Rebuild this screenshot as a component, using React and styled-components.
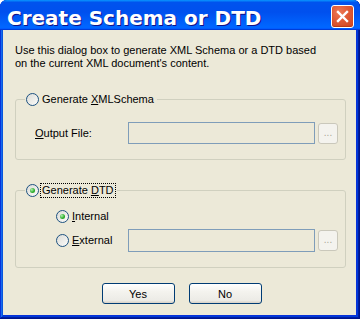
import React from "react";
import styled, { createGlobalStyle } from "styled-components";

const Global = createGlobalStyle`
  html, body { margin: 0; padding: 0; background: #ffffff; }
  * { box-sizing: border-box; }
`;

const Window = styled.div`
  width: 360px;
  height: 319px;
  display: flex;
  flex-direction: column;
  border-radius: 7px 7px 0 0;
  overflow: hidden;
  background: #0831d9;
  box-shadow: inset -1px -1px #00138c, inset 1px 1px #0831d9,
    inset -2px -2px #001ea0, inset 2px 2px #166aee,
    inset -3px -3px #003bda, inset 3px 3px #0855dd;
  font-family: "Liberation Sans", Arial, sans-serif;
  font-size: 11px;
  color: #000;
`;

const TitleBar = styled.div`
  height: 30px;
  flex-shrink: 0;
  display: flex;
  align-items: flex-start;
  justify-content: space-between;
  padding: 0 6px 0 7px;
  background: linear-gradient(
    180deg,
    #0997ff 0,
    #0053ee 8%,
    #0050ee 40%,
    #0066ff 88%,
    #0066ff 93%,
    #005bff 95%,
    #003dd7 96%,
    #003dd7 100%
  );
`;

const TitleText = styled.div`
  margin-top: 7px;
  font-family: "DejaVu Sans", Verdana, sans-serif;
  font-weight: bold;
  font-size: 20px;
  line-height: 23px;
  color: #fff;
  text-shadow: 1px 1px #0f1089;
  white-space: nowrap;
`;

const CloseButton = styled.div`
  margin-top: 5px;
  width: 23px;
  height: 23px;
  border: 1px solid #fff;
  border-radius: 3px;
  background: radial-gradient(
    circle at 35% 30%,
    #ec7a58 0,
    #e05a35 45%,
    #d0451f 100%
  );
  box-shadow: inset 0 -1px 1px #b83a14;
  display: flex;
  align-items: center;
  justify-content: center;
`;

const Body = styled.div`
  flex: 1;
  margin: 0 4px 4px 3px;
  background: #ece9d8;
  padding: 14px 10px 0 12px;
  display: flex;
  flex-direction: column;
`;

const Description = styled.p`
  margin: 0;
  line-height: 13px;
`;

const Group = styled.fieldset`
  margin: ${(p) => p.$top}px 0 0 0;
  padding: ${(p) => p.$padTop}px 0 ${(p) => p.$padBottom}px 0;
  min-inline-size: 0;
  border: 1px solid #d0d0bf;
  border-radius: 3px;
  display: flex;
  flex-direction: column;
  gap: ${(p) => p.$gap || 0}px;
`;

const Legend = styled.legend`
  margin-left: 9px;
  padding: 0 2px 0 1px;
  height: 15px;
  display: flex;
  align-items: center;
  gap: 2px;
`;

const RadioCircle = styled.span`
  width: 13px;
  height: 13px;
  flex-shrink: 0;
  border-radius: 50%;
  border: 1px solid #1c5180;
  background: linear-gradient(135deg, #dcdcd7 0%, #fbfbf9 100%);
  display: flex;
  align-items: center;
  justify-content: center;
  &::after {
    content: "";
    width: 5px;
    height: 5px;
    border-radius: 50%;
    background: radial-gradient(circle at 35% 35%, #b4f0b4 0, #2fb02f 55%, #1c8f1c 100%);
    display: ${(p) => (p.$checked ? "block" : "none")};
  }
`;

const RadioLabel = styled.span`
  line-height: 13px;
  padding: 0 1px;
  outline: ${(p) => (p.$focus ? "1px dotted #000" : "none")};
  outline-offset: 0;
  white-space: nowrap;
`;

const Key = styled.u`
  text-decoration: underline;
  text-underline-offset: 1px;
`;

const Row = styled.div`
  height: ${(p) => p.$h || 23}px;
  display: flex;
  align-items: center;
  padding-left: ${(p) => p.$indent}px;
`;

const FieldLabel = styled.span`
  width: ${(p) => p.$w}px;
  flex-shrink: 0;
  display: flex;
  align-items: center;
  gap: 2px;
  white-space: nowrap;
`;

const TextBox = styled.div`
  width: 187px;
  height: ${(p) => p.$h || 22}px;
  border: 1px solid #7f9db9;
  background: transparent;
`;

const BrowseButton = styled.div`
  margin-left: 3px;
  width: 20px;
  height: 21px;
  border: 1px solid #cac8bb;
  border-radius: 3px;
  background: #f4f3ee;
  color: #aca899;
  font-size: 10px;
  line-height: 1;
  display: flex;
  align-items: flex-end;
  justify-content: center;
  padding-bottom: 5px;
`;

const ButtonRow = styled.div`
  margin-top: 15px;
  display: flex;
  justify-content: center;
  gap: 14px;
  padding-left: 2px;
`;

const Button = styled.div`
  width: 73px;
  height: 21px;
  border: 1px solid #003c74;
  border-radius: 3px;
  background: linear-gradient(180deg, #fff 0%, #f4f3ee 40%, #ecebe6 86%, #d6d0c5 100%);
  display: flex;
  align-items: center;
  justify-content: center;
  font-size: 11px;
`;

function Radio({ checked, focus, children }) {
  return (
    <>
      <RadioCircle $checked={checked} />
      <RadioLabel $focus={focus}>{children}</RadioLabel>
    </>
  );
}

export default function App() {
  return (
    <>
      <Global />
      <Window>
        <TitleBar>
          <TitleText>Create Schema or DTD</TitleText>
          <CloseButton>
            <svg width="13" height="13" viewBox="0 0 13 13">
              <path d="M2 2 L11 11 M11 2 L2 11" stroke="#fff" strokeWidth="2.4" strokeLinecap="square" />
            </svg>
          </CloseButton>
        </TitleBar>
        <Body>
          <Description>
            Use this dialog box to generate XML Schema or a DTD based
            <br />
            on the current XML document's content.
          </Description>

          <Group $top={22} $padTop={15} $padBottom={15}>
            <Legend>
              <Radio>
                Generate <Key>X</Key>MLSchema
              </Radio>
            </Legend>
            <Row $indent={19} $h={22}>
              <FieldLabel $w={93}>
                <span>
                  <Key>O</Key>utput File:
                </span>
              </FieldLabel>
              <TextBox />
              <BrowseButton>...</BrowseButton>
            </Row>
          </Group>

          <Group $top={23} $padTop={7} $padBottom={15} $gap={1}>
            <Legend>
              <Radio checked focus>
                Generate <Key>D</Key>TD
              </Radio>
            </Legend>
            <Row $indent={40}>
              <FieldLabel $w={72}>
                <Radio checked>
                  <Key>I</Key>nternal
                </Radio>
              </FieldLabel>
            </Row>
            <Row $indent={40}>
              <FieldLabel $w={72}>
                <Radio>
                  <Key>E</Key>xternal
                </Radio>
              </FieldLabel>
              <TextBox $h={23} />
              <BrowseButton>...</BrowseButton>
            </Row>
          </Group>

          <ButtonRow>
            <Button>Yes</Button>
            <Button>No</Button>
          </ButtonRow>
        </Body>
      </Window>
    </>
  );
}
